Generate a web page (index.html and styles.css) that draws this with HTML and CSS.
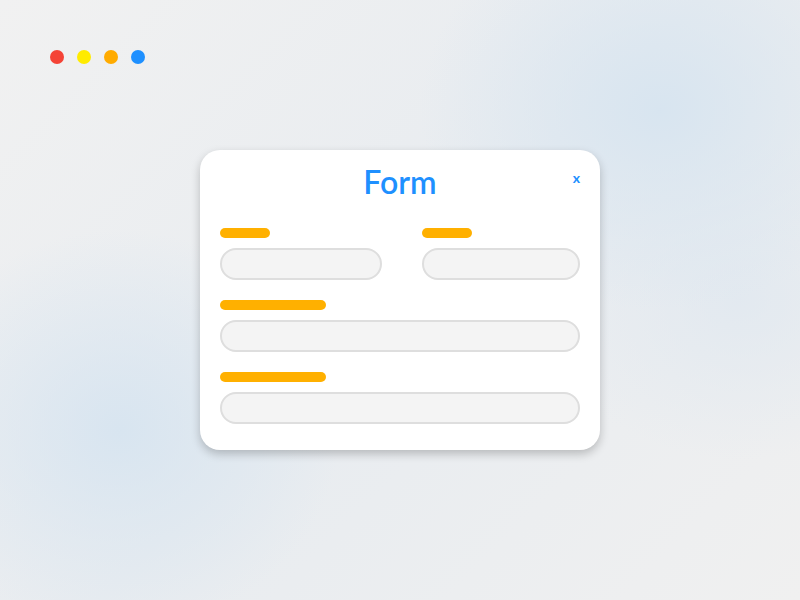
FILE: index.html
```html
<!DOCTYPE html>
<html>
<head>
<meta charset="utf-8">
<link rel="stylesheet" href="styles.css">
</head>
<body>
<div class="page">
  <div class="dots">
    <span class="dot red"></span>
    <span class="dot yellow"></span>
    <span class="dot orange"></span>
    <span class="dot blue"></span>
  </div>
  <div class="stage">
    <div class="card">
      <div class="header">
        <h1 class="title">Form</h1>
        <span class="close">x</span>
      </div>
      <div class="row two">
        <div class="field">
          <div class="label short"></div>
          <div class="input"></div>
        </div>
        <div class="field">
          <div class="label short"></div>
          <div class="input"></div>
        </div>
      </div>
      <div class="row">
        <div class="field">
          <div class="label long"></div>
          <div class="input"></div>
        </div>
      </div>
      <div class="row">
        <div class="field">
          <div class="label long"></div>
          <div class="input"></div>
        </div>
      </div>
    </div>
  </div>
</div>
</body>
</html>
```

FILE: styles.css
```css
html, body {
  margin: 0;
  padding: 0;
  width: 800px;
  height: 600px;
  overflow: hidden;
}
body {
  font-family: Lato, "Open Sans", sans-serif;
}
.page {
  width: 800px;
  height: 600px;
  box-sizing: border-box;
  padding: 50px 0 0 50px;
  background:
    radial-gradient(ellipse 240px 200px at 660px 110px, rgba(214,228,240,0.9), rgba(214,228,240,0)),
    radial-gradient(ellipse 220px 200px at 120px 430px, rgba(214,228,240,0.9), rgba(214,228,240,0)),
    radial-gradient(ellipse 200px 160px at 740px 300px, rgba(220,230,240,0.6), rgba(220,230,240,0)),
    linear-gradient(135deg, #f1f1f1 0%, #e8ecf0 50%, #f0f0f0 100%);
}
.dots {
  display: flex;
  gap: 13px;
  height: 14px;
}
.dot {
  width: 14px;
  height: 14px;
  border-radius: 50%;
}
.red { background: #f44336; }
.yellow { background: #ffeb00; }
.orange { background: #ffab00; }
.blue { background: #1e90ff; }
.stage {
  padding: 86px 0 0 150px;
}
.card {
  width: 400px;
  height: 300px;
  box-sizing: border-box;
  background: #fff;
  border-radius: 20px;
  box-shadow: 0 4px 10px rgba(0,0,0,0.22);
  padding: 12px 20px 0 20px;
}
.header {
  position: relative;
  height: 40px;
  margin-bottom: 26px;
}
.title {
  margin: 0;
  font-size: 32px;
  line-height: 40px;
  font-weight: 600;
  color: #1e90ff;
  text-align: center;
}
.close {
  position: absolute;
  right: 0;
  top: 6px;
  font-size: 14px;
  font-weight: 700;
  line-height: 20px;
  color: #1e90ff;
}
.row {
  margin-bottom: 20px;
}
.row.two {
  display: grid;
  grid-template-columns: 162px 158px;
  column-gap: 40px;
}
.label {
  height: 10px;
  border-radius: 5px;
  background: #ffb000;
  margin-bottom: 10px;
}
.label.short { width: 50px; }
.label.long { width: 106px; }
.input {
  height: 32px;
  box-sizing: border-box;
  border: 2px solid #dedede;
  border-radius: 16px;
  background: #f4f4f4;
}
```
